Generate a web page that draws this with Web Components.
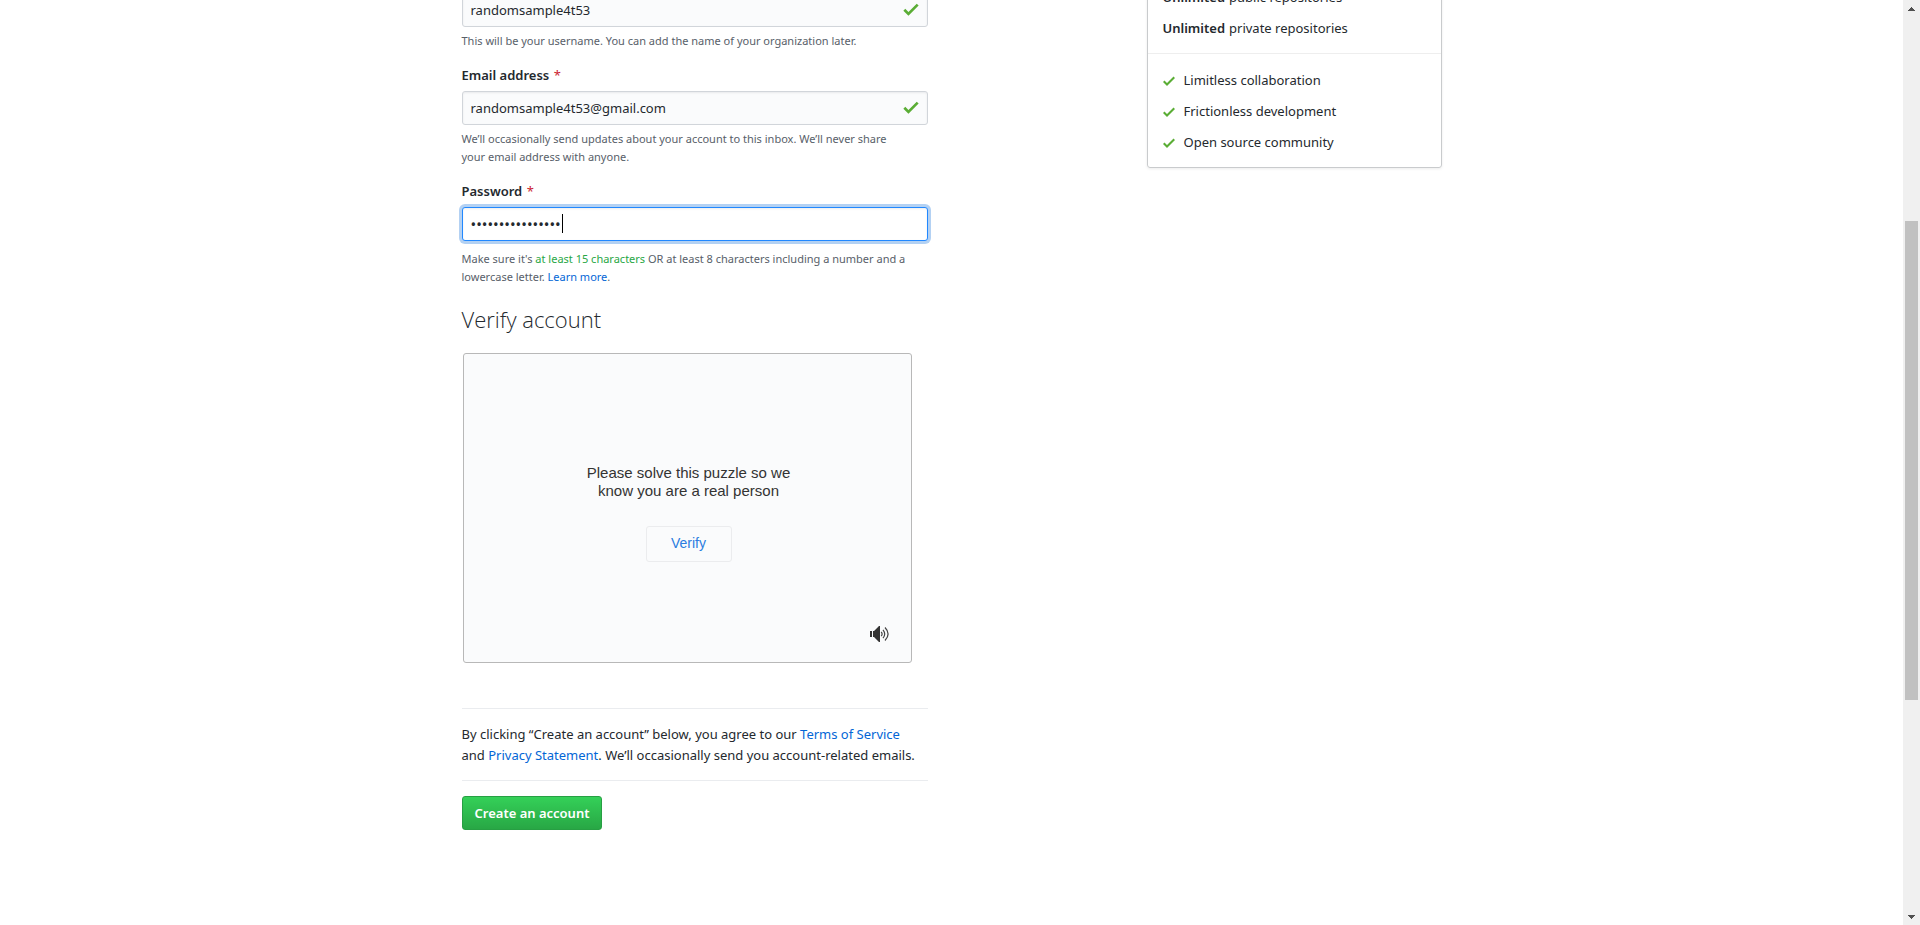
<!DOCTYPE html>
<html lang="en">
<head>
<meta charset="utf-8">
<title>Join GitHub</title>
<style>
  body { margin: 0; background: #fff; }
</style>
</head>
<body>
<signup-page>
  <signup-form></signup-form>
  <plan-card></plan-card>
</signup-page>

<script>
const CHECK = '<svg viewBox="0 3 12 11" aria-hidden="true"><path d="M12 5l-8 8-4-4 1.5-1.5L4 10l6.5-6.5L12 5z" fill="currentColor"/></svg>';

class BaseElement extends HTMLElement {
  constructor() {
    super();
    this.attachShadow({ mode: 'open' }).innerHTML =
      '<style>*{box-sizing:border-box}a{color:#0366d6;text-decoration:none}</style>' + this.template();
  }
}

customElements.define('signup-page', class extends BaseElement {
  template() {
    return `<style>
      :host { display: flex; height: 100vh; overflow: hidden; color: #24292e;
        font: 13px/21px "Noto Sans", "Open Sans", sans-serif; }
      .view { flex: 1; min-width: 0; }
      main { display: flex; justify-content: space-between; align-items: flex-start;
        max-width: 980px; margin: -29px auto 0; }
    </style>
    <div class="view"><main><slot></slot></main></div>
    <page-scrollbar></page-scrollbar>`;
  }
});

customElements.define('page-scrollbar', class extends BaseElement {
  template() {
    return `<style>
      :host { display: grid; flex: none; width: 17px; padding: 0 2px; background: #f0f0f0;
        grid-template-rows: 17px 204fr 479fr 208fr 17px; }
      svg { width: 7px; height: 4px; fill: #505050; place-self: center; }
      .thumb { background: #c1c1c1; grid-row: 3; }
      .down { grid-row: 5; }
    </style>
    <svg viewBox="0 0 7 4"><path d="M0 4V3h1V2h1V1h1V0h1v1h1v1h1v1h1v1z"/></svg>
    <div class="thumb"></div>
    <svg class="down" viewBox="0 0 7 4"><path d="M0 0v1h1v1h1v1h1v1h1V3h1V2h1V1h1V0z"/></svg>`;
  }
});

customElements.define('form-field', class extends HTMLElement {
  connectedCallback() {
    if (this.shadowRoot) return;
    const type = this.getAttribute('type');
    const label = this.getAttribute('label');
    const hidden = this.hasAttribute('nolabel');
    const password = type === 'password';
    this.attachShadow({ mode: 'open' }).innerHTML = `<style>
      * { box-sizing: border-box; }
      :host { display: block; margin-bottom: 15px; }
      label { display: block; margin-bottom: 5px; font-weight: 600; }
      label span { margin-left: 1px; color: #cb2431; font-weight: 400; }
      .box { position: relative; }
      input { display: block; width: 100%; height: 34px; padding: 0 32px 0 8px;
        border: 1px solid #d1d5da; border-radius: 3px; outline: 0; background: #fafbfc;
        box-shadow: inset 0 1px 2px rgba(27,31,35,.075); color: #24292e; font: inherit; }
      svg { position: absolute; right: 9px; top: 10px; width: 16px; height: 14px; color: #5aad35; }
      input[type=password] { background: #fff; border-color: #2188ff; caret-color: transparent; font-size: 15px;
        box-shadow: inset 0 1px 2px rgba(27,31,35,.075), 0 0 0 3px rgba(3,102,214,.3); }
      .caret { position: absolute; left: 100px; top: 7px; width: 1px; height: 19px; background: #000; }
      .hint { margin: 5px 0 0; color: #586069; font-size: 11px; line-height: 18px; }
      :host([type=password]) .hint { margin-top: 9px; }
    </style>
    ${hidden ? '' : `<label for="field">${label} <span>*</span></label>`}
    <div class="box">
      <input id="field" type="${type}" value="${this.getAttribute('value')}" ${hidden ? `aria-label="${label}"` : ''} spellcheck="false">
      ${password ? '<i class="caret"></i>' : CHECK}
    </div>
    <p class="hint"><slot></slot></p>`;
  }
});

customElements.define('verify-puzzle', class extends BaseElement {
  template() {
    return `<style>
      :host { display: flex; flex-direction: column; align-items: center; justify-content: center;
        position: relative; max-width: 449px; height: 310px; margin-left: 1px; padding: 10px 0 0 3px;
        box-sizing: border-box; border: 1px solid #b8b8b8; border-radius: 3px; background: #fafbfc;
        color: #333; font: 15px/18px "Liberation Sans", Arial, sans-serif; text-align: center; }
      p { margin: 0 0 26px; }
      .verify { width: 86px; height: 36px; padding: 0 0 2px; border: 1px solid #ebecee;
        border-radius: 3px; background: none; color: #2b7de0; font: 14px "Liberation Sans", Arial, sans-serif; }
      .audio { position: absolute; right: 21px; bottom: 20px; padding: 0; border: 0; background: none; }
      svg { display: block; width: 20px; height: 16px; }
    </style>
    <p>Please solve this puzzle so we<br>know you are a real person</p>
    <button class="verify" type="button">Verify</button>
    <button class="audio" type="button" aria-label="Audio challenge">
      <svg viewBox="0 0 20 16"><g fill="#333"><path d="M0 5h2v6H0z"/><path d="M3 5h1l5-5h1v16H9l-5-5H3z"/></g>
      <g fill="none" stroke="#444" stroke-width="1.2"><path d="M11.2 5.8q1.8 2.2 0 4.4M13 3.8q3.4 4.2 0 8.4M15 1.5q6.2 6.5 0 13"/></g></svg>
    </button>`;
  }
});

customElements.define('signup-form', class extends BaseElement {
  template() {
    return `<style>
      :host { display: block; width: 466px; max-width: 100%; padding-top: 22px; box-sizing: border-box; }
      em { color: #28a745; font-style: normal; }
      h2 { margin: 0 0 16px; font: 300 22px/36px "Open Sans", sans-serif; }
      .terms { margin: 45px 0 15px; padding: 15px 0 14px; border: solid #eaecef; border-width: 1px 0; }
      .create { height: 34px; padding: 0 12px; border: 1px solid #279f43; border-radius: 3px; color: #fff;
        background: linear-gradient(#34d058, #28a745); font: 600 13px/20px "Noto Sans", "Open Sans", sans-serif; }
    </style>
    <form>
      <form-field type="text" label="Username" value="randomsample4t53" nolabel>This will be your username. You can add the name of your organization later.</form-field>
      <form-field type="email" label="Email address" value="randomsample4t53@gmail.com">We’ll occasionally send updates about your account to this inbox. We’ll never share<br>your email address with anyone.</form-field>
      <form-field type="password" label="Password" value="samplepassword15">Make sure it's <em>at least 15 characters</em> OR at least 8 characters including a number and a<br>lowercase letter. <a href="#">Learn more</a>.</form-field>
      <h2>Verify account</h2>
      <verify-puzzle></verify-puzzle>
      <div class="terms">By clicking “Create an account” below, you agree to our <a href="#">Terms of Service</a><br>and <a href="#">Privacy Statement</a>. We’ll occasionally send you account-related emails.</div>
      <button class="create" type="submit">Create an account</button>
    </form>`;
  }
});

customElements.define('plan-card', class extends BaseElement {
  template() {
    return `<style>
      :host { display: block; width: 295px; box-sizing: border-box; border: 1px solid #c9cbcd;
        border-radius: 3px; box-shadow: 0 1px 3px rgba(0,0,0,.08); }
      ul { display: grid; gap: 10px; margin: 0; padding: 15px 15px 14px; list-style: none; }
      ul + ul { padding-top: 16px; border-top: 1px solid #eee; }
      b { font-weight: 600; }
      li { display: flex; align-items: center; gap: 4px; }
      ul + ul li { gap: 9px; }
      svg { width: 12px; height: 11px; margin-top: 2px; color: #5aad35; }
    </style>
    <ul>
      <li><b>Unlimited</b> public repositories</li>
      <li><b>Unlimited</b> private repositories</li>
    </ul>
    <ul>
      <li>${CHECK}Limitless collaboration</li>
      <li>${CHECK}Frictionless development</li>
      <li>${CHECK}Open source community</li>
    </ul>`;
  }
});
</script>
</body>
</html>
